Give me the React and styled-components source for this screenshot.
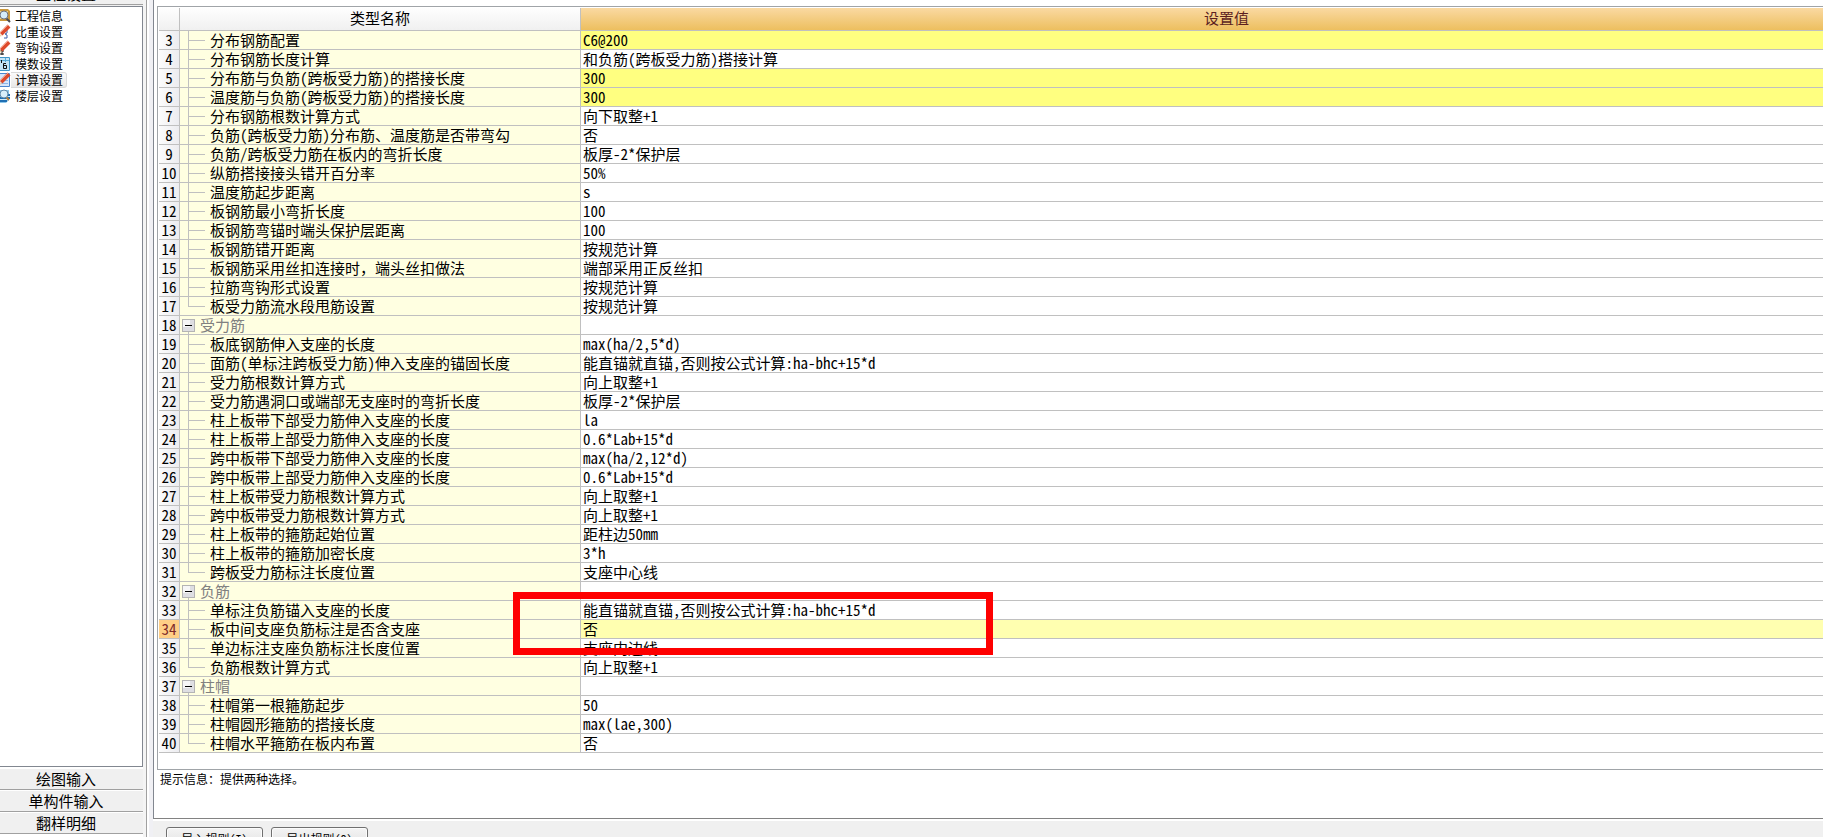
import React, { useState } from 'react';
import styled, { createGlobalStyle } from 'styled-components';

const GlobalStyles = createGlobalStyle`
  * {
    box-sizing: border-box;
  }

  body {
    margin: 0;
    background: #f0f0f0;
    color: #000;
    font-family: "Noto Sans Mono CJK SC", "Noto Sans CJK SC", monospace;
    font-size: 15px;
    line-height: 18px;
    overflow: hidden;
  }

  button {
    font-family: inherit;
    color: inherit;
  }
`

const Window = styled.div`
  display: flex;
  height: 100vh;
`

const Sidebar = styled.div`
  flex: 0 0 143px;
  display: flex;
  flex-direction: column;
  overflow: hidden;
`

const SidebarTop = styled.div`
  flex: none;
  display: flex;
  align-items: flex-end;
  height: 6px;
  padding-bottom: 1px;
`

const SidebarTabs = styled.div`
  flex: none;
  height: 70px;
  padding-top: 1px;
  background: #fff;
  overflow: hidden;
`

const Tab = styled.button`
  display: block;
  flex: none;
  width: 100%;
  height: 22px;
  padding: 0 11px 0 0;
  border: 0;
  border-top: 1px solid #fff;
  border-bottom: 1px solid #a0a0a0;
  background: #f0f0f0;
  font-size: 15px;
  line-height: 20px;
  text-align: center;
`

const ModuleList = styled.div`
  flex: 1;
  min-height: 0;
  padding-top: 1px;
  background: #fff;
  border: 1px solid #828790;
  border-left: 0;
`

const ModuleItem = styled.button`
  display: flex;
  align-items: center;
  height: 16px;
  padding: 0;
  border: 0;
  background: none;
  font-size: 12px;
  line-height: 16px;
`

const ModuleLabel = styled.span`
  height: 16px;
  padding: 0 3px 0 4px;
  border: 1px solid ${(props) => props.$active ? '#d9d9d9' : 'transparent'};
  border-left: 0;
  border-radius: 0 3px 3px 0;
  background: ${(props) => props.$active ? 'linear-gradient(#fafafa, #e8e8e8)' : 'none'};
  line-height: 14px;
`

const ModuleIcon = styled.svg`
  flex: none;
  width: 16px;
  height: 16px;
  margin-left: -5px;
`

const Splitter = styled.div`
  flex: 0 0 10px;
  border-left: 3px solid #f4f4f4;
  background: linear-gradient(90deg, #a0a0a0 1px, #fff 1px, #fff 3px, #f0f0f4 3px);
`

const Main = styled.div`
  flex: 1;
  min-width: 0;
  display: flex;
  flex-direction: column;
`

const Panel = styled.div`
  flex: 1;
  min-height: 0;
  display: flex;
  flex-direction: column;
  padding: 6px 0 0 3px;
  background: #fff;
  border-left: 1px solid #828790;
  border-bottom: 1px solid #828282;
`

const GridBox = styled.div`
  position: relative;
  padding: 1px 0 16px 1px;
  border: 1px solid #a0a4a8;
  border-right: 0;
  overflow: hidden;
`

/* the value column runs past the right edge of the window */
const Grid = styled.table`
  width: calc(100% + 50px);
  table-layout: fixed;
  border-collapse: separate;
  border-spacing: 0;
`

const HeadCell = styled.th`
  height: 23px;
  padding: 0 0 2px;
  border-right: 1px solid #c0c0c0;
  border-bottom: 1px solid #c0c0c0;
  background: ${(props) => props.$current ? 'linear-gradient(#fad9a2, #edbf5f)' : 'linear-gradient(#fefefe, #f0f0f0)'};
  color: ${(props) => props.$current ? '#5c1f1f' : '#000'};
  font-weight: normal;
`

const RowNumber = styled.th`
  height: 19px;
  padding: 0;
  border-right: 1px solid #c0c0c0;
  border-bottom: 1px solid #c0c0c0;
  background: ${(props) => props.$current ? '#ffcf86' : 'linear-gradient(90deg, #fcfcfc, #ececf0)'};
  color: ${(props) => props.$current ? '#7d2a2a' : '#000'};
  font-weight: normal;
  text-align: center;
`

const Cell = styled.td`
  height: 19px;
  padding: 0;
  border-right: 1px solid #c0c0c0;
  border-bottom: 1px solid #c0c0c0;
  background: ${(props) => props.$bg || '#fff'};
  white-space: nowrap;
`

const Value = styled.div`
  height: 18px;
  padding-left: 2px;
`

const Name = styled.div`
  display: flex;
  height: 18px;
  padding-left: ${(props) => props.$group ? '2px' : '8px'};
  color: ${(props) => props.$group ? '#808080' : '#000'};
`

const Branch = styled.span`
  width: 17px;
  height: 18px;
  margin-right: 5px;
  background:
    linear-gradient(#c0c0c0, #c0c0c0) 0 0 / 1px ${(props) => props.$last ? '9px' : '18px'} no-repeat,
    linear-gradient(#c0c0c0, #c0c0c0) 0 9px / 17px 1px no-repeat;
`

const Toggle = styled.button`
  width: 13px;
  height: 18px;
  margin-right: 5px;
  padding: 0;
  border: 0;
  background: none;

  svg {
    display: block;
  }
`

/* red frame laid over the rows about negative bars */
const Marker = styled.div`
  position: absolute;
  left: 355px;
  top: 585px;
  width: 480px;
  height: 63px;
  border: 7px solid #fe0000;
  pointer-events: none;
`

const Hint = styled.div`
  flex: 1;
  min-height: 0;
  padding: 0 3px;
  font-size: 12px;
`

const Footer = styled.div`
  flex: none;
  display: flex;
  gap: 8px;
  height: 18px;
  padding: 6px 12px 0 13px;
  border-top: 2px solid #fff;
  overflow: hidden;
`

const FooterButton = styled.button`
  flex: none;
  width: 97px;
  height: 24px;
  padding: 0;
  border: 1px solid #707070;
  border-radius: 3px;
  background: linear-gradient(#f4f4f4, #dedede);
  box-shadow: inset 0 0 0 1px #fcfcfc;
  font-size: 12px;
  line-height: 22px;
`

const YELLOW = '#ffff80'
const GROUPS = [18, 32, 37]
const LAST = [17, 31, 36, 40]

const rows = [
  [3, '分布钢筋配置', 'C6@200', YELLOW],
  [4, '分布钢筋长度计算', '和负筋(跨板受力筋)搭接计算'],
  [5, '分布筋与负筋(跨板受力筋)的搭接长度', '300', YELLOW],
  [6, '温度筋与负筋(跨板受力筋)的搭接长度', '300', YELLOW],
  [7, '分布钢筋根数计算方式', '向下取整+1'],
  [8, '负筋(跨板受力筋)分布筋、温度筋是否带弯勾', '否'],
  [9, '负筋/跨板受力筋在板内的弯折长度', '板厚-2*保护层'],
  [10, '纵筋搭接接头错开百分率', '50%'],
  [11, '温度筋起步距离', 's'],
  [12, '板钢筋最小弯折长度', '100'],
  [13, '板钢筋弯锚时端头保护层距离', '100'],
  [14, '板钢筋错开距离', '按规范计算'],
  [15, '板钢筋采用丝扣连接时，端头丝扣做法', '端部采用正反丝扣'],
  [16, '拉筋弯钩形式设置', '按规范计算'],
  [17, '板受力筋流水段甩筋设置', '按规范计算'],
  [18, '受力筋', ''],
  [19, '板底钢筋伸入支座的长度', 'max(ha/2,5*d)'],
  [20, '面筋(单标注跨板受力筋)伸入支座的锚固长度', '能直锚就直锚,否则按公式计算:ha-bhc+15*d'],
  [21, '受力筋根数计算方式', '向上取整+1'],
  [22, '受力筋遇洞口或端部无支座时的弯折长度', '板厚-2*保护层'],
  [23, '柱上板带下部受力筋伸入支座的长度', 'la'],
  [24, '柱上板带上部受力筋伸入支座的长度', '0.6*Lab+15*d'],
  [25, '跨中板带下部受力筋伸入支座的长度', 'max(ha/2,12*d)'],
  [26, '跨中板带上部受力筋伸入支座的长度', '0.6*Lab+15*d'],
  [27, '柱上板带受力筋根数计算方式', '向上取整+1'],
  [28, '跨中板带受力筋根数计算方式', '向上取整+1'],
  [29, '柱上板带的箍筋起始位置', '距柱边50mm'],
  [30, '柱上板带的箍筋加密长度', '3*h'],
  [31, '跨板受力筋标注长度位置', '支座中心线'],
  [32, '负筋', ''],
  [33, '单标注负筋锚入支座的长度', '能直锚就直锚,否则按公式计算:ha-bhc+15*d'],
  [34, '板中间支座负筋标注是否含支座', '否', '#ffffb0'],
  [35, '单边标注支座负筋标注长度位置', '支座内边线'],
  [36, '负筋根数计算方式', '向上取整+1'],
  [37, '柱帽', ''],
  [38, '柱帽第一根箍筋起步', '50'],
  [39, '柱帽圆形箍筋的搭接长度', 'max(lae,300)'],
  [40, '柱帽水平箍筋在板内布置', '否'],
]

const pencil = (
  <>
    <path d="M14 2 L6 10" stroke="#dd4a2c" strokeWidth="4" />
    <path d="M13 1 L5 9" stroke="#f59a80" />
    <path d="M4 9 L7 12 L3 13 Z" fill="#f2cfa0" />
  </>
)

const modules = [
  {
    name: '工程信息',
    icon: (
      <>
        <path d="M0 1 H13 L15 3 V13 H0 Z" fill="#c9973c" />
        <path d="M0 3 H13 V11 H0 Z" fill="#f3d88c" />
        <path d="M11 10 L15 14" stroke="#4b4a52" strokeWidth="2" />
        <circle cx="9" cy="7" r="4" fill="#d5ecfa" stroke="#6d717e" />
      </>
    ),
  },
  {
    name: '比重设置',
    icon: (
      <>
        <path d="M9 6 H12 V9 L10 10 L12 11 V14 H9" fill="none" stroke="#3d5fa8" />
        {pencil}
      </>
    ),
  },
  {
    name: '弯钩设置',
    icon: (
      <>
        <path d="M4 11 H9 M7 8 V15 M5 14 H9" fill="none" stroke="#111" />
        {pencil}
      </>
    ),
  },
  {
    name: '模数设置',
    icon: (
      <>
        <path d="M0 1 H14 V15 H0 Z" fill="#c4e5f7" />
        <path d="M0 1.5 H14.5 V14.5 H0" fill="none" stroke="#3f96c8" />
        <path d="M0 4.5 H14 M10.5 2 V6 M4.5 2 V6" stroke="#5aacd6" />
        <path d="M11 7.5 H8.5 V12.5 H11.5 V9.5 H9" fill="none" stroke="#111" />
        <path d="M6.5 4 V7" stroke="#111" />
      </>
    ),
  },
  {
    name: '计算设置',
    icon: (
      <>
        <path d="M0 1 H14 V14 H0 Z" fill="#d6e6fb" />
        <path d="M0 1.5 H14.5 V14.5 H0" fill="none" stroke="#4c86cf" />
        <path d="M0 11.5 H13 M8 8.5 H13" stroke="#8db6ea" />
        {pencil}
      </>
    ),
  },
  {
    name: '楼层设置',
    icon: (
      <>
        <path d="M1 2 H14 V12 L11 15 H1 Z" fill="#8cc6ea" />
        <path d="M1 7 H15 M1 10 H15 M1 13 H12" stroke="#1f6fb3" strokeWidth="2" />
        <path d="M1 8.5 H15 M1 11.5 H14" stroke="#d4ecfa" />
        <path d="M11 9 L14 12" stroke="#b07a35" strokeWidth="2" />
        <circle cx="9" cy="6" r="4" fill="#d9effb" stroke="#5f87a8" />
      </>
    ),
  },
]

function Minus() {
  return (
    <svg width="13" height="18" viewBox="0 0 13 18" shapeRendering="crispEdges">
      <rect x="0.5" y="3.5" width="12" height="12" fill="#dedee2" stroke="#b4b4b4" />
      <rect x="1" y="4" width="7" height="7" fill="#f6f6f6" />
      <path d="M3 9.5 H10" stroke="#000" />
      <path d="M6.5 16 V18" stroke="#c0c0c0" />
    </svg>
  )
}

function SettingRow({ row, current, onSelect }) {
  const [number, name, value, bg] = row
  const group = GROUPS.includes(number)

  return (
    <tr onClick={() => onSelect(number)}>
      <RowNumber scope="row" $current={current}>{number}</RowNumber>
      <Cell $bg="#ffffe1">
        <Name $group={group}>
          {group
            ? <Toggle aria-label={name}><Minus /></Toggle>
            : <Branch $last={LAST.includes(number)} />}
          {name}
        </Name>
      </Cell>
      <Cell $bg={bg}><Value>{value}</Value></Cell>
    </tr>
  )
}

function App() {
  const [active, setActive] = useState('计算设置')
  const [current, setCurrent] = useState(34)

  return (
    <>
      <GlobalStyles />
      <Window>
        <Sidebar>
          <SidebarTop>
            <Tab>工程设置</Tab>
          </SidebarTop>
          <ModuleList>
            {modules.map(({ name, icon }) => (
              <ModuleItem key={name} onClick={() => setActive(name)}>
                <ModuleIcon viewBox="0 0 16 16">{icon}</ModuleIcon>
                <ModuleLabel $active={name === active}>{name}</ModuleLabel>
              </ModuleItem>
            ))}
          </ModuleList>
          <SidebarTabs>
            <Tab>绘图输入</Tab>
            <Tab>单构件输入</Tab>
            <Tab>翻样明细</Tab>
          </SidebarTabs>
        </Sidebar>
        <Splitter />
        <Main>
          <Panel>
            <GridBox>
              <Grid>
                <colgroup>
                  <col style={{ width: 21 }} />
                  <col style={{ width: 401 }} />
                  <col />
                </colgroup>
                <thead>
                  <tr>
                    <HeadCell />
                    <HeadCell scope="col">类型名称</HeadCell>
                    <HeadCell scope="col" $current>设置值</HeadCell>
                  </tr>
                </thead>
                <tbody>
                  {rows.map(row => (
                    <SettingRow key={row[0]} row={row} current={row[0] === current} onSelect={setCurrent} />
                  ))}
                </tbody>
              </Grid>
              <Marker />
            </GridBox>
            <Hint>提示信息：提供两种选择。</Hint>
          </Panel>
          <Footer>
            <FooterButton>导入规则(I)</FooterButton>
            <FooterButton>导出规则(O)</FooterButton>
          </Footer>
        </Main>
      </Window>
    </>
  );
}

export default App;
